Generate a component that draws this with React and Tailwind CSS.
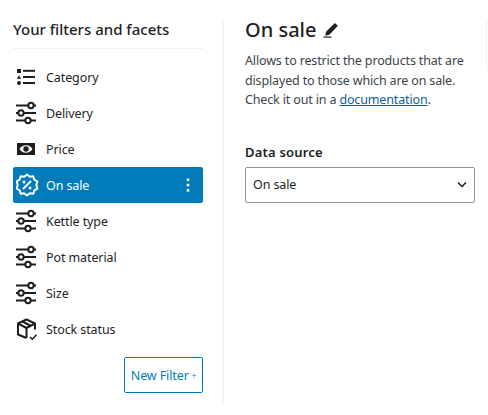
import { EllipsisVertical } from 'lucide-react';

const FONT = "font-['Noto_Sans','Open_Sans',sans-serif]";

function SlidersIcon() {
  return (
    <svg width="22" height="24" viewBox="0 0 22 24" fill="none" stroke="currentColor" strokeWidth="2">
      <path d="M0 4.500h12M18 4.500h2M0 12h2M8 12h12M0 19.500h9M15 19.500h5" />
      <circle cx="15" cy="4.500" r="2.700" />
      <circle cx="5" cy="12" r="2.700" />
      <circle cx="12" cy="19.500" r="2.700" />
    </svg>
  );
}

function ListIcon() {
  return (
    <svg width="22" height="24" viewBox="0 0 22 24" fill="currentColor">
      <rect x="1" y="4" width="4" height="4" />
      <path d="M3 10.200l2.200 3.600H0.800z" />
      <circle cx="3" cy="18" r="2" />
      <rect x="7" y="4.800" width="12" height="2" />
      <rect x="7" y="11" width="12" height="2" />
      <rect x="7" y="17" width="12" height="2" />
    </svg>
  );
}

function MoneyIcon() {
  return (
    <svg width="22" height="24" viewBox="0 0 22 24">
      <path fill="currentColor" fillRule="evenodd" d="M1 6h18v12H1z M3.500 12c1.500-2.600 3.800-3.800 6.500-3.800s5 1.200 6.500 3.800c-1.500 2.600-3.800 3.800-6.500 3.800S5 14.600 3.500 12z" />
      <circle cx="10" cy="12" r="2.700" fill="currentColor" />
    </svg>
  );
}

function BadgeIcon() {
  return (
    <svg width="24" height="24" viewBox="0 0 24 24" fill="none" stroke="currentColor" strokeWidth="2" strokeLinejoin="round">
      <path d="M11 1.500l2.800 2.200 3.500-.4 1 3.400 3.100 1.700L20.300 12l1.100 3.600-3.100 1.700-1 3.400-3.500-.4L11 22.500l-2.800-2.200-3.500.4-1-3.400-3.100-1.700L1.700 12 .6 8.400l3.100-1.700 1-3.400 3.500.4z" />
      <path d="M15 8l-8 8" />
      <circle cx="8" cy="9" r="1.500" fill="currentColor" stroke="none" />
      <circle cx="14" cy="15" r="1.500" fill="currentColor" stroke="none" />
    </svg>
  );
}

function BoxIcon() {
  return (
    <svg width="22" height="24" viewBox="0 0 22 24" fill="none" stroke="currentColor" strokeWidth="2" strokeLinejoin="round">
      <path d="M10.500 21L2 17.500V6.500L10.500 2.500 19 6.500v6" />
      <path d="M2 6.500l8.500 4.500L19 6.500M10.500 11v10M6.500 4.500l8.500 4.500" />
      <path d="M14 20l2.300 2.300 4.200-4.600" strokeWidth="1.500" />
    </svg>
  );
}

function EditIcon() {
  return (
    <svg width="16" height="16" viewBox="0 0 16 16" fill="currentColor">
      <path d="M11.800 1l3.100 2.700-8.600 9.100-4.200 1 1-4z" />
      <rect x="0.500" y="14.500" width="8" height="1.200" />
    </svg>
  );
}

const filters = [
  { name: 'Category', icon: <ListIcon /> },
  { name: 'Delivery', icon: <SlidersIcon /> },
  { name: 'Price', icon: <MoneyIcon /> },
  { name: 'On sale', icon: <BadgeIcon />, active: true },
  { name: 'Kettle type', icon: <SlidersIcon /> },
  { name: 'Pot material', icon: <SlidersIcon /> },
  { name: 'Size', icon: <SlidersIcon /> },
  { name: 'Stock status', icon: <BoxIcon /> },
];

function FilterRow({ filter }) {
  const colors = filter.active ? 'bg-[#007cba] text-white' : 'text-[#1e1e1e]';
  return (
    <div className={`flex h-9 items-center rounded-[2px] pl-[3px] pr-[6px] text-[12.5px] tracking-[-0.1px] ${colors}`}>
      <span className="flex w-[30px] shrink-0 justify-start">{filter.icon}</span>
      <span className="flex-1 pt-[2px]">{filter.name}</span>
      {filter.active && <EllipsisVertical size={18} strokeWidth={2} />}
    </div>
  );
}

export default function App() {
  return (
    <div className={`${FONT} flex h-[415px] w-[488px] overflow-hidden bg-white text-[#1e1e1e]`}>
      <aside className="mb-3 mt-5 flex w-[224px] shrink-0 flex-col border-r border-[#f0f0f0] pl-[13px] pr-5">
        <h2 className="flex h-[18px] items-center text-[15px] font-medium leading-[18px]">Your filters and facets</h2>
        <div className="mb-[10px] border-b border-[#f0f0f0] pt-[10px]" />
        {filters.map((filter) => (
          <FilterRow key={filter.name} filter={filter} />
        ))}
        <button className="ml-auto mt-[10px] flex h-9 w-[79px] items-center justify-center rounded-[2px] border border-[#007cba] pt-[2px] text-[12.5px] tracking-[-0.1px] text-[#007cba]">
          New Filter<span className="ml-[3px] text-[8px]">+</span>
        </button>
      </aside>
      <main className="flex-1 pl-[21px] pt-[16px]">
        <div className="flex w-[230px] items-center gap-[7px]">
          <h1 className="text-[20px] font-medium leading-[28px]">On sale</h1>
          <EditIcon />
        </div>
        <p className="mt-[7px] w-[230px] text-[12.5px] leading-[19.5px] tracking-[-0.15px] text-[#3c434a]">
          Allows to restrict the products that are displayed to those which are on sale. Check it out in a{' '}
          <a className="text-[#135e96] underline">documentation</a>.
        </p>
        <div className="mt-[33px] text-[13px] font-semibold leading-[18px] tracking-[0.2px]">Data source</div>
        <div className="mt-[6px] flex h-9 w-[230px] items-center justify-between rounded-[2px] border border-[#949494] pl-[7px] pr-[7px] text-[12.5px] tracking-[-0.1px]">
          <span className="pt-[2px]">On sale</span>
          <svg width="10" height="7" viewBox="0 0 10 7" fill="none" stroke="currentColor" strokeWidth="1.5">
            <path d="M1 1.500l4 4 4-4" />
          </svg>
        </div>
      </main>
      <div className="mr-[1px] mt-5 h-[50px] w-px shrink-0 bg-[#f0f0f0]" />
    </div>
  );
}
